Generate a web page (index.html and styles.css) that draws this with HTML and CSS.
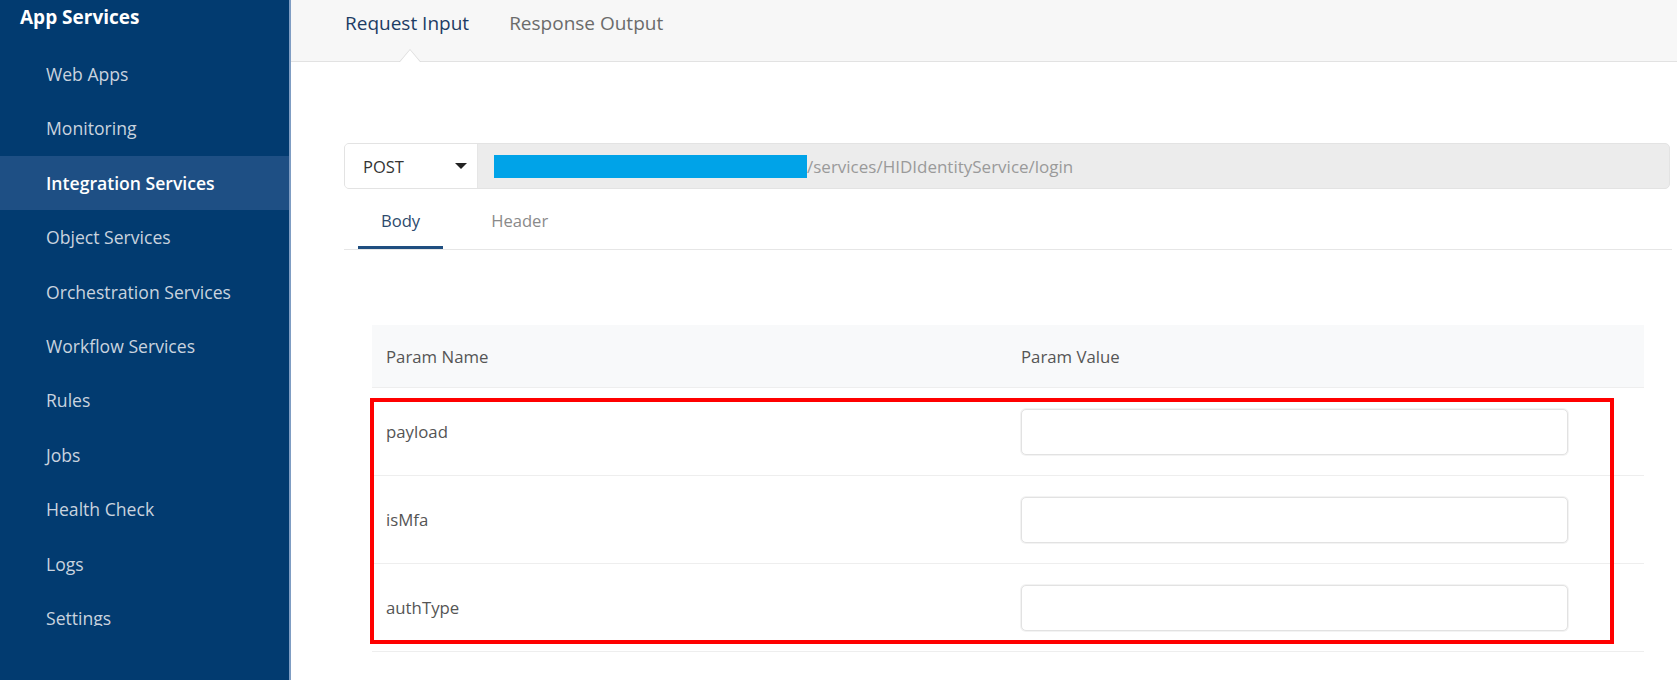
FILE: index.html
```html
<!DOCTYPE html>
<html lang="en">
<head>
<meta charset="utf-8">
<title>App Services - Integration Services</title>
<link rel="stylesheet" href="styles.css">
</head>
<body>
<div class="app">
  <aside class="sidebar">
    <div class="side-title">App Services</div>
    <ul class="side-list">
      <li>Web Apps</li>
      <li>Monitoring</li>
      <li class="active">Integration Services</li>
      <li>Object Services</li>
      <li>Orchestration Services</li>
      <li>Workflow Services</li>
      <li>Rules</li>
      <li>Jobs</li>
      <li>Health Check</li>
      <li>Logs</li>
      <li>Settings</li>
    </ul>
  </aside>
  <main class="main">
    <div class="topbar">
      <div class="toptab active">Request Input</div>
      <div class="toptab">Response Output</div>
    </div>
    <div class="content">
      <div class="urlbar">
        <div class="method"><span>POST</span><span class="caret"></span></div>
        <div class="url"><span class="redact"></span><span class="path">/services/HIDIdentityService/login</span></div>
      </div>
      <div class="subtabs">
        <div class="subtab active">Body</div>
        <div class="subtab">Header</div>
      </div>
      <div class="table">
        <div class="thead">
          <div class="cell">Param Name</div>
          <div class="cell">Param Value</div>
        </div>
        <div class="row">
          <div class="cell">payload</div>
          <div class="cell"><input class="field" type="text"></div>
        </div>
        <div class="row">
          <div class="cell">isMfa</div>
          <div class="cell"><input class="field" type="text"></div>
        </div>
        <div class="row">
          <div class="cell">authType</div>
          <div class="cell"><input class="field" type="text"></div>
        </div>
        <div class="annot"></div>
      </div>
    </div>
  </main>
</div>
</body>
</html>
```

FILE: styles.css
```css
* { box-sizing: border-box; }
html, body { margin: 0; padding: 0; }
body {
  font-family: "Open Sans", "Noto Sans", "Liberation Sans", sans-serif;
  background: #ffffff;
  color: #555;
}
.app {
  display: flex;
  height: 680px;
  overflow: hidden;
}

/* Sidebar */
.sidebar {
  width: 291px;
  flex-shrink: 0;
  background: #023b70;
  border-right: 2px solid #7f9dc3;
}
.side-title {
  height: 47px;
  padding: 5px 0 0 20px;
  font-size: 19px;
  line-height: 24px;
  font-weight: 700;
  color: #ffffff;
}
.side-list {
  list-style: none;
  margin: 0;
  padding: 0;
  height: 579px;
  overflow: hidden;
}
.side-list li {
  height: 54.4px;
  line-height: 54.4px;
  padding-left: 46px;
  font-size: 17.6px;
  color: #c9d3df;
}
.side-list li.active {
  background: #1e4f84;
  color: #ffffff;
  font-weight: 600;
}

/* Main */
.main {
  flex: 1;
  min-width: 0;
}
.topbar {
  height: 62px;
  display: flex;
  gap: 40px;
  padding-left: 54px;
  background: #f7f7f7;
  border-bottom: 1px solid #e2e2e2;
}
.toptab {
  position: relative;
  padding-top: 10px;
  font-size: 19px;
  line-height: 26px;
  color: #6b6b6b;
}
.toptab.active { color: #1d3c64; }
.toptab.active::before,
.toptab.active::after {
  content: "";
  position: absolute;
  left: calc(50% + 3px);
  width: 0;
  height: 0;
  border-left: 11px solid transparent;
  border-right: 11px solid transparent;
  transform: translateX(-50%);
}
.toptab.active::before {
  bottom: -1px;
  border-bottom: 13px solid #dcdcdc;
}
.toptab.active::after {
  bottom: -1px;
  border-left-width: 10px;
  border-right-width: 10px;
  border-bottom: 12px solid #ffffff;
}

.content {
  padding: 81px 5px 0 53px;
}
.urlbar {
  display: flex;
  height: 46px;
  margin-right: 2px;
  border: 1px solid #e3e3e3;
  border-radius: 5px;
  background: #ececec;
  overflow: hidden;
}
.method {
  width: 133px;
  flex-shrink: 0;
  display: flex;
  align-items: center;
  justify-content: space-between;
  padding: 0 10px 0 18px;
  background: #ffffff;
  border-right: 1px solid #e6e6e6;
  font-size: 16.5px;
  color: #333;
}
.caret {
  width: 0;
  height: 0;
  border-left: 6px solid transparent;
  border-right: 6px solid transparent;
  border-top: 6px solid #222;
}
.url {
  display: flex;
  align-items: center;
  padding-left: 16px;
}
.redact {
  width: 313px;
  height: 23px;
  background: #00a3e8;
}
.path {
  font-size: 17px;
  color: #9a9a9a;
}

.subtabs {
  display: flex;
  height: 61px;
  border-bottom: 1px solid #e6e6e6;
}
.subtab {
  height: 60px;
  padding: 21px 23px 0;
  font-size: 16.6px;
  line-height: 22px;
  color: #8a8a8a;
  border-bottom: 3px solid transparent;
}
.subtab:first-child { margin-left: 14px; }
.subtab + .subtab { margin-left: 25px; }
.subtab.active {
  color: #2d4a6c;
  border-bottom-color: #1f4e80;
}

.table {
  position: relative;
  margin: 75px 28px 0 28px;
}
.thead, .row {
  display: grid;
  grid-template-columns: 635px 1fr;
  align-items: center;
}
.thead {
  height: 63px;
  background: #f8f9fa;
  border-bottom: 1px solid #eeeeee;
}
.row {
  height: 88px;
  border-bottom: 1px solid #eeeeee;
}
.cell {
  padding-left: 14px;
  font-size: 16.8px;
  color: #555;
}
.field {
  display: block;
  width: 547px;
  height: 46px;
  border: 1px solid #e2e2e2;
  border-radius: 5px;
  box-shadow: 0 0 0 1px #f3f3f3;
  background: #ffffff;
  outline: none;
}
.annot {
  position: absolute;
  left: -2px;
  top: 73px;
  width: 1244px;
  height: 246px;
  border: 4px solid #ff0000;
  pointer-events: none;
}
```
